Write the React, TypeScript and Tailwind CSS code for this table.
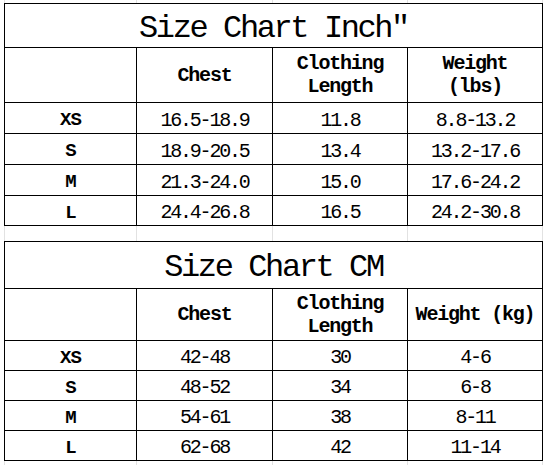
import React from "react";

const cols = "grid grid-cols-[131px_135px_134px_134px] gap-px bg-black p-px w-[539px]";

function Spacer({ h }: { h: string }) {
  return (
    <div className={`grid grid-cols-[132px_136px_135px_136px] w-[539px] ${h}`}>
      <div className="border-l border-[#e2e2e2]" />
      <div className="border-l border-[#e2e2e2]" />
      <div className="border-l border-[#e2e2e2]" />
      <div className="border-l border-r border-[#e2e2e2]" />
    </div>
  );
}

function DataRow({ cells, h }: { cells: string[]; h: string }) {
  return (
    <>
      {cells.map((c, i) => (
        <div
          key={i}
          className={`bg-white flex items-center justify-center pt-[5px] ${h} ${
            i === 0 ? "font-bold text-[19px] tracking-[-1px]" : "text-[20px] tracking-[-2.2px]"
          }`}
        >
          {c}
        </div>
      ))}
    </>
  );
}

export default function App() {
  const inch = [
    ["XS", "16.5-18.9", "11.8", "8.8-13.2"],
    ["S", "18.9-20.5", "13.4", "13.2-17.6"],
    ["M", "21.3-24.0", "15.0", "17.6-24.2"],
    ["L", "24.4-26.8", "16.5", "24.2-30.8"],
  ];
  const cm = [
    ["XS", "42-48", "30", "4-6"],
    ["S", "48-52", "34", "6-8"],
    ["M", "54-61", "38", "8-11"],
    ["L", "62-68", "42", "11-14"],
  ];
  const inchH = ["h-[30px]", "h-[30px]", "h-[30px]", "h-[29px]"];
  const head = "bg-white flex flex-col items-center justify-center font-bold text-[20px] tracking-[-1.2px] leading-[23px]";
  return (
    <div className="w-[547px] h-[465px] bg-white pl-[4px] text-black font-['Liberation_Mono',monospace] overflow-hidden">
      <Spacer h="h-[3px]" />
      <div className={cols}>
        <div className="col-span-4 h-[43px] bg-white flex items-center justify-center pt-[6px] text-[32px] tracking-[-2.4px]">
          Size Chart Inch″
        </div>
        <div className="bg-white h-[54px]" />
        <div className={head}>Chest</div>
        <div className={head}>
          <span>Clothing</span>
          <span>Length</span>
        </div>
        <div className={head}>
          <span>Weight</span>
          <span>(lbs)</span>
        </div>
        {inch.map((r, i) => (
          <DataRow key={i} cells={r} h={inchH[i]} />
        ))}
      </div>
      <Spacer h="h-[15px]" />
      <div className={cols}>
        <div className="col-span-4 h-[46px] bg-white flex items-center justify-center pt-[6px] text-[32px] tracking-[-2.4px]">
          Size Chart CM
        </div>
        <div className="bg-white h-[51px]" />
        <div className={head}>Chest</div>
        <div className={head}>
          <span>Clothing</span>
          <span>Length</span>
        </div>
        <div className={head}>Weight (kg)</div>
        {cm.map((r, i) => (
          <DataRow key={i} cells={r} h="h-[29px]" />
        ))}
      </div>
      <Spacer h="h-[5px]" />
    </div>
  );
}
